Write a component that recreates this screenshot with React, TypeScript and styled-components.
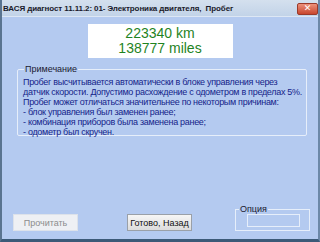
import React from "react";
import styled, { createGlobalStyle } from "styled-components";

const Global = createGlobalStyle`
  html, body { margin: 0; padding: 0; background: #b4caf0; }
  body { font-family: "Liberation Sans", "DejaVu Sans", sans-serif; }
`;

const Window = styled.div`
  width: 320px;
  height: 242px;
  box-sizing: border-box;
  display: flex;
  flex-direction: column;
  background: #b4caf0;
  border-left: 2px solid #5a7490;
  border-right: 2px solid #6c88a8;
  border-bottom: 3px solid #3c5a78;
  overflow: hidden;
`;

const TitleBar = styled.div`
  height: 16px;
  flex: none;
  display: flex;
  align-items: center;
  justify-content: space-between;
  padding: 0 0 0 1px;
  background: linear-gradient(#d4e0ee, #c2d3e8);
  border-bottom: 1px solid #dde7f4;
`;

const Title = styled.span`
  font-size: 8px;
  font-weight: bold;
  color: #1a1a2a;
  letter-spacing: -0.1px;
  white-space: nowrap;
`;

const Close = styled.div`
  width: 19px;
  height: 10px;
  margin-top: 1px;
  border-radius: 2px;
  background: linear-gradient(#ec907a, #c8462e);
  border: 1px solid #9a3a2a;
  display: flex;
  align-items: center;
  justify-content: center;
  color: #fff;
  font-size: 9px;
  font-weight: bold;
  line-height: 1;
`;

const Body = styled.div`
  flex: 1;
  display: flex;
  flex-direction: column;
  padding: 7px 7px 7px 15px;
`;

const Readout = styled.div`
  align-self: center;
  margin-left: -8px;
  width: 145px;
  height: 34px;
  box-sizing: border-box;
  background: #ffffff;
  display: flex;
  flex-direction: column;
  align-items: center;
  justify-content: center;
  color: #1f841f;
  font-size: 14px;
  line-height: 15px;
`;

const Group = styled.fieldset`
  margin: 6px 0 0 0;
  padding: 3px 4px 3px 5px;
  border: 1px solid #e6eefa;
  border-radius: 2px;
  width: 286px;
  box-sizing: border-box;
  height: 72px;
`;

const Legend = styled.legend`
  padding: 0 1px;
  margin-left: 1px;
  font-size: 9px;
  color: #202030;
`;

const Note = styled.div`
  font-size: 9px;
  line-height: 10px;
  color: #14248a;
  letter-spacing: -0.3px;
  white-space: nowrap;
`;

const Bottom = styled.div`
  margin-top: auto;
  display: flex;
  align-items: flex-end;
  margin-left: -4px;
`;

const Button = styled.div<{ $disabled?: boolean }>`
  width: 65px;
  height: 17px;
  box-sizing: border-box;
  display: flex;
  align-items: center;
  justify-content: center;
  font-size: 9px;
  margin-bottom: 1px;
  border: 1px solid ${(p) => (p.$disabled ? "#dde2ea" : "#9aa0a8")};
  background: ${(p) =>
    p.$disabled ? "#eef0f4" : "linear-gradient(#f6f6f6, #dcdcdc)"};
  color: ${(p) => (p.$disabled ? "#8c8c8c" : "#101010")};
`;

const Spacer = styled.div<{ $w: number }>`
  width: ${(p) => p.$w}px;
  flex: none;
`;

const OptGroup = styled.fieldset`
  margin: 0 0 1px 0;
  padding: 0 9px 2px 11px;
  width: 75px;
  height: 27px;
  box-sizing: border-box;
  border: 1px solid #e6eefa;
`;

const OptLegend = styled.legend`
  padding: 0 1px;
  margin-left: -8px;
  font-size: 9px;
  color: #202030;
`;

const OptInner = styled.div`
  height: 13px;
  box-sizing: border-box;
  border: 1px solid #e6eefa;
  margin-top: 0;
`;

export default function App() {
  return (
    <>
      <Global />
      <Window>
        <TitleBar>
          <Title>ВАСЯ диагност 11.11.2: 01- Электроника двигателя,&nbsp; Пробег</Title>
          <Close>✕</Close>
        </TitleBar>
        <Body>
          <Readout>
            <div>223340 km</div>
            <div>138777 miles</div>
          </Readout>
          <Group>
            <Legend>Примечание</Legend>
            <Note>Пробег высчитывается автоматически в блоке управления через</Note>
            <Note>датчик скорости. Допустимо расхождение с одометром в пределах 5%.</Note>
            <Note>Пробег может отличаться значительнее по некоторым причинам:</Note>
            <Note>- блок управления был заменен ранее;</Note>
            <Note>- комбинация приборов была заменена ранее;</Note>
            <Note>- одометр был скручен.</Note>
          </Group>
          <Bottom>
            <Button $disabled>Прочитать</Button>
            <Spacer $w={49} />
            <Button>Готово, Назад</Button>
            <Spacer $w={43} />
            <OptGroup>
              <OptLegend>Опция</OptLegend>
              <OptInner />
            </OptGroup>
          </Bottom>
        </Body>
      </Window>
    </>
  );
}
